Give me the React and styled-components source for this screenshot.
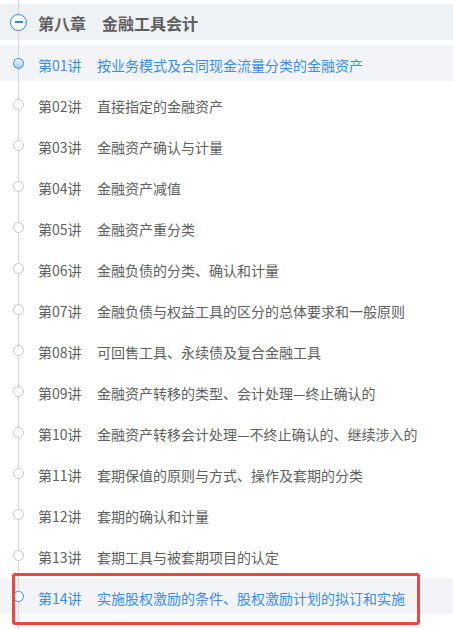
import styled, { createGlobalStyle } from 'styled-components';

const GlobalStyle = createGlobalStyle`
  html, body {
    margin: 0;
    padding: 0;
    background: #fff;
  }
  body {
    font-family: "Noto Sans CJK SC", "Noto Sans", sans-serif;
  }
`;

const Wrapper = styled.div`
  position: relative;
  width: 453px;
  height: 629px;
  overflow: hidden;
  padding-top: 4px;
  box-sizing: border-box;

  &::before {
    content: '';
    position: absolute;
    left: 18px;
    top: 0;
    bottom: 0;
    width: 1px;
    background: #d6d6d6;
    z-index: 1;
  }
`;

const Chapter = styled.div`
  display: flex;
  align-items: center;
  height: 36px;
  background: #eff2f5;
  margin-bottom: 3px;
`;

const Marker = styled.div`
  width: 37px;
  flex: none;
  display: flex;
  justify-content: center;
  position: relative;
  z-index: 2;
`;

const Toggle = styled.span`
  width: 15px;
  height: 15px;
  border: 1.5px solid #2f86d8;
  border-radius: 50%;
  background: #fff;
  display: flex;
  align-items: center;
  justify-content: center;

  &::after {
    content: '';
    width: 8px;
    height: 1.5px;
    background: #2f86d8;
  }
`;

const ChapterTitle = styled.h1`
  margin: 0 0 0 1px;
  padding-top: 2px;
  font-size: 16px;
  font-weight: 700;
  color: #5f5f5f;
  line-height: 1;

  & > span {
    margin-right: 16px;
  }
`;

const List = styled.ul`
  margin: 0;
  padding: 0;
  list-style: none;
`;

const Item = styled.li`
  display: flex;
  align-items: center;
  height: 36px;
  margin-top: 5px;
  background: ${(p) => (p.$active ? '#f2f4f7' : 'transparent')};
  color: ${(p) => (p.$active ? '#3b8de6' : '#606060')};
  font-size: 14px;
  line-height: 1;
  white-space: nowrap;
`;

const Dot = styled.span`
  width: 9px;
  height: 9px;
  border-radius: 50%;
  border: 1px solid ${(p) => (p.$active ? '#3b8de6' : '#c9c9c9')};
  background: ${(p) =>
    p.$filled ? 'linear-gradient(#eef5fd, #a6cbf2)' : '#fff'};
`;

const Lesson = styled.span`
  margin-left: 1px;
  padding-top: 3px;
  width: 59px;
  flex: none;
`;

const Title = styled.span`
  padding-top: 3px;
`;

const Highlight = styled.div`
  position: absolute;
  left: 12px;
  top: 573px;
  width: 408px;
  height: 52px;
  box-sizing: border-box;
  border: 3.5px solid #e8474a;
  border-radius: 3px;
  z-index: 3;
`;

const lessons = [
  '按业务模式及合同现金流量分类的金融资产',
  '直接指定的金融资产',
  '金融资产确认与计量',
  '金融资产减值',
  '金融资产重分类',
  '金融负债的分类、确认和计量',
  '金融负债与权益工具的区分的总体要求和一般原则',
  '可回售工具、永续债及复合金融工具',
  '金融资产转移的类型、会计处理—终止确认的',
  '金融资产转移会计处理—不终止确认的、继续涉入的',
  '套期保值的原则与方式、操作及套期的分类',
  '套期的确认和计量',
  '套期工具与被套期项目的认定',
  '实施股权激励的条件、股权激励计划的拟订和实施',
];

export default function App() {
  return (
    <>
      <GlobalStyle />
      <Wrapper>
        <Chapter>
          <Marker>
            <Toggle />
          </Marker>
          <ChapterTitle>
            <span>第八章</span>金融工具会计
          </ChapterTitle>
        </Chapter>
        <List>
          {lessons.map((title, i) => {
            const active = i === 0 || i === lessons.length - 1;
            return (
              <Item key={title} $active={active}>
                <Marker>
                  <Dot $active={active} $filled={i === 0} />
                </Marker>
                <Lesson>第{String(i + 1).padStart(2, '0')}讲</Lesson>
                <Title>{title}</Title>
              </Item>
            );
          })}
        </List>
        <Highlight />
      </Wrapper>
    </>
  );
}
